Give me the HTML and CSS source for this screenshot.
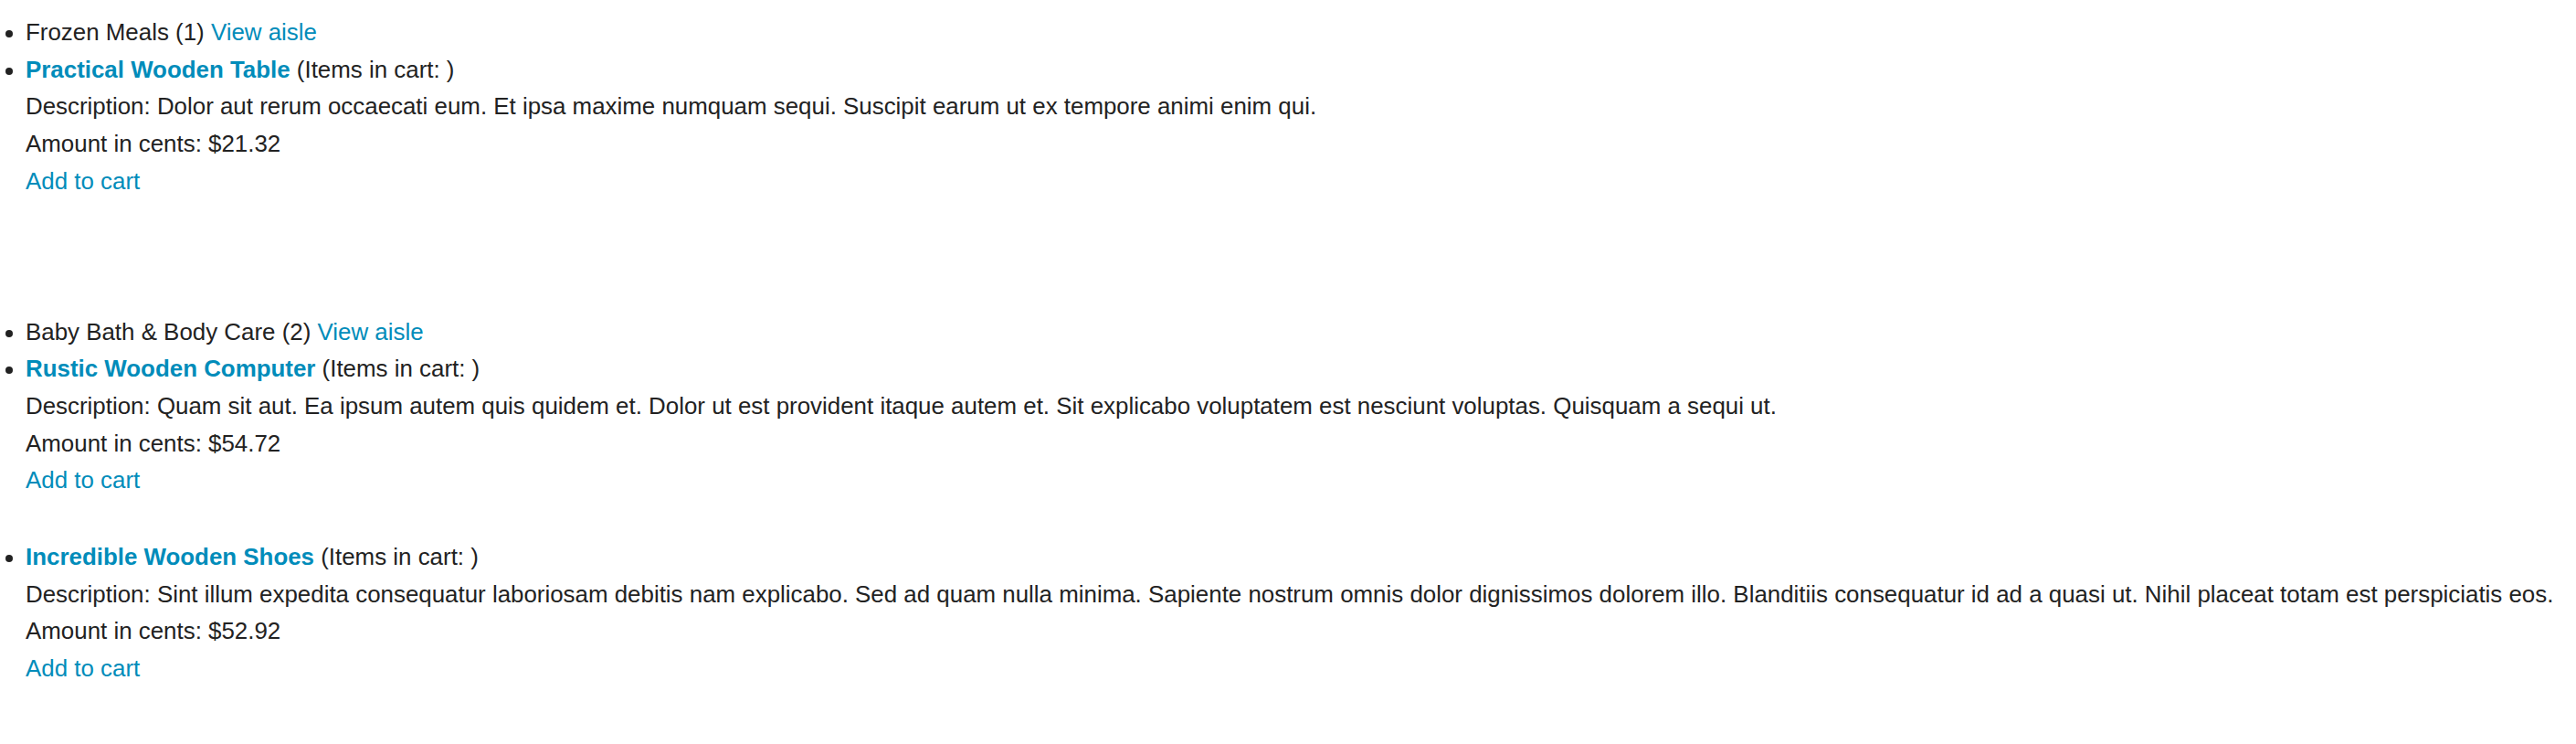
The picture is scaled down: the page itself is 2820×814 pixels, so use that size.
FILE: index.html
```html
<!DOCTYPE html>
<html lang="en">
<head>
    <meta charset="UTF-8">
    <title>Aisles</title>
    <link rel="stylesheet" href="styles.css">
</head>
<body>
    <div class="aisle">
        <ul>
            <li>Frozen Meals (1) <a href="#">View aisle</a></li>
            <li class="product">
                <a href="#" class="name">Practical Wooden Table</a> (Items in cart: )
                <div>Description: Dolor aut rerum occaecati eum. Et ipsa maxime numquam sequi. Suscipit earum ut ex tempore animi enim qui.</div>
                <div>Amount in cents: $21.32</div>
                <a href="#">Add to cart</a>
            </li>
        </ul>
    </div>
    <div class="aisle">
        <ul>
            <li>Baby Bath &amp; Body Care (2) <a href="#">View aisle</a></li>
            <li class="product">
                <a href="#" class="name">Rustic Wooden Computer</a> (Items in cart: )
                <div>Description: Quam sit aut. Ea ipsum autem quis quidem et. Dolor ut est provident itaque autem et. Sit explicabo voluptatem est nesciunt voluptas. Quisquam a sequi ut.</div>
                <div>Amount in cents: $54.72</div>
                <a href="#">Add to cart</a>
            </li>
            <li class="product">
                <a href="#" class="name">Incredible Wooden Shoes</a> (Items in cart: )
                <div>Description: Sint illum expedita consequatur laboriosam debitis nam explicabo. Sed ad quam nulla minima. Sapiente nostrum omnis dolor dignissimos dolorem illo. Blanditiis consequatur id ad a quasi ut. Nihil placeat totam est perspiciatis eos.</div>
                <div>Amount in cents: $52.92</div>
                <a href="#">Add to cart</a>
            </li>
        </ul>
    </div>
</body>
</html>
```

FILE: styles.css
```css
body {
    font-family: "Liberation Sans", Arial, sans-serif;
    font-size: 25.9px;
    line-height: 40.7px;
    color: #222;
    margin: 0;
    padding: 15px 0 0;
    background: #fff;
}
a {
    color: #008cba;
    text-decoration: none;
}
.aisle {
    margin-bottom: 124px;
}
.aisle:last-child {
    margin-bottom: 0;
}
.aisle ul {
    margin: 0;
    padding-left: 28px;
}
.product {
    margin-bottom: 43px;
}
.product:last-child {
    margin-bottom: 0;
}
.name {
    font-weight: bold;
}
```
